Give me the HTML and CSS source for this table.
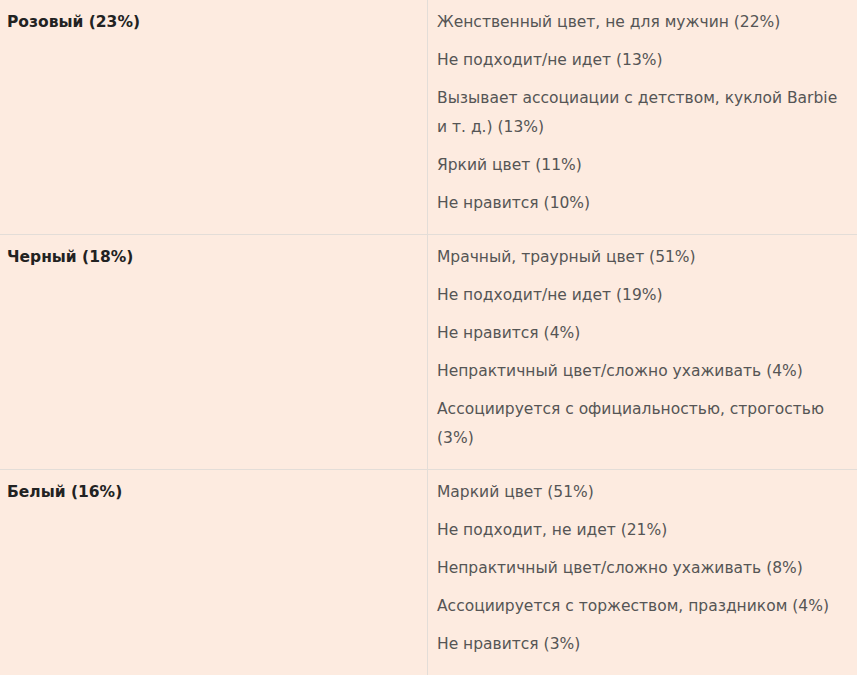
FILE: index.html
```html
<!DOCTYPE html>
<html lang="ru">
<head>
<meta charset="utf-8">
<link rel="stylesheet" href="styles.css">
</head>
<body>
<table class="colors">
  <tr>
    <td class="label">Розовый (23%)</td>
    <td class="reasons">
      <p>Женственный цвет, не для мужчин (22%)</p>
      <p>Не подходит/не идет (13%)</p>
      <p>Вызывает ассоциации с детством, куклой Barbie и т. д.) (13%)</p>
      <p>Яркий цвет (11%)</p>
      <p>Не нравится (10%)</p>
    </td>
  </tr>
  <tr>
    <td class="label">Черный (18%)</td>
    <td class="reasons">
      <p>Мрачный, траурный цвет (51%)</p>
      <p>Не подходит/не идет (19%)</p>
      <p>Не нравится (4%)</p>
      <p>Непрактичный цвет/сложно ухаживать (4%)</p>
      <p>Ассоциируется с официальностью, строгостью (3%)</p>
    </td>
  </tr>
  <tr>
    <td class="label">Белый (16%)</td>
    <td class="reasons">
      <p>Маркий цвет (51%)</p>
      <p>Не подходит, не идет (21%)</p>
      <p>Непрактичный цвет/сложно ухаживать (8%)</p>
      <p>Ассоциируется с торжеством, праздником (4%)</p>
      <p>Не нравится (3%)</p>
    </td>
  </tr>
</table>
</body>
</html>
```

FILE: styles.css
```css
html, body {
  margin: 0;
  padding: 0;
  background: #fdebe0;
  overflow: hidden;
}
body {
  font-family: "DejaVu Sans", sans-serif;
  font-size: 15.5px;
  line-height: 29px;
  color: #555;
}
.colors {
  width: 857px;
  border-collapse: collapse;
  background: #fdebe0;
}
.colors tr {
  border-bottom: 1px solid #e3ddd8;
}
.colors td {
  vertical-align: top;
  padding: 8px 15px 7px 9px;
}
.colors td.label {
  width: 415px;
  padding-left: 7px;
  padding-right: 5px;
  font-weight: bold;
  color: #222;
  border-right: 1px solid #e3ddd8;
}
.colors p {
  margin: 0 0 9px;
}
```
